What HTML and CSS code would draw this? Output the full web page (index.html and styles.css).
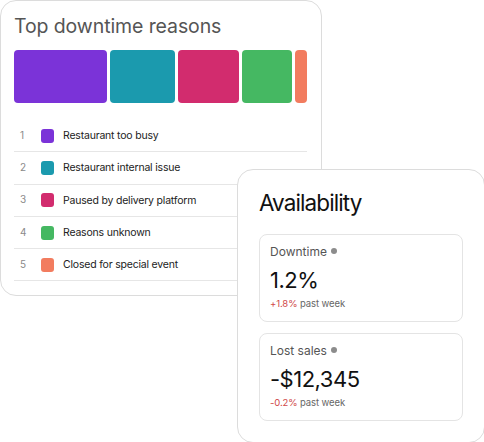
FILE: index.html
```html
<!DOCTYPE html>
<html>
<head>
<meta charset="utf-8">
<link rel="stylesheet" href="styles.css">
</head>
<body>
<div class="canvas">
  <section class="card reasons">
    <h2 class="reasons-title">Top downtime reasons</h2>
    <div class="bars">
      <div class="bar c1" style="width:93px"></div>
      <div class="bar c2" style="width:65px"></div>
      <div class="bar c3" style="width:61px"></div>
      <div class="bar c4" style="width:50px"></div>
      <div class="bar c5" style="width:12px"></div>
    </div>
    <ul class="list">
      <li class="row"><span class="num">1</span><span class="sw c1"></span><span class="label">Restaurant too busy</span></li>
      <li class="row"><span class="num">2</span><span class="sw c2"></span><span class="label">Restaurant internal issue</span></li>
      <li class="row"><span class="num">3</span><span class="sw c3"></span><span class="label">Paused by delivery platform</span></li>
      <li class="row"><span class="num">4</span><span class="sw c4"></span><span class="label">Reasons unknown</span></li>
      <li class="row"><span class="num">5</span><span class="sw c5"></span><span class="label">Closed for special event</span></li>
    </ul>
  </section>

  <section class="card avail">
    <h2 class="avail-title">Availability</h2>
    <div class="metric">
      <div class="m-label">Downtime <span class="dot"></span></div>
      <div class="m-value">1.2%</div>
      <div class="m-sub"><span class="neg">+1.8%</span> past week</div>
    </div>
    <div class="metric">
      <div class="m-label">Lost sales <span class="dot"></span></div>
      <div class="m-value">-$12,345</div>
      <div class="m-sub"><span class="neg">-0.2%</span> past week</div>
    </div>
  </section>
</div>
</body>
</html>
```

FILE: styles.css
```css
* { box-sizing: border-box; }
html, body { margin: 0; padding: 0; background: #fff; }
body { font-family: Inter, "Noto Sans", sans-serif; color: #111; }

.canvas {
  position: relative;
  width: 484px;
  height: 442px;
  overflow: hidden;
}

.card {
  background: #fff;
  border: 1px solid #dcdcdc;
  border-radius: 16px;
}

.reasons {
  width: 322px;
  height: 296px;
  padding: 13px 14px 0 13px;
}

.reasons-title {
  margin: 0;
  font-size: 19.5px;
  line-height: 24px;
  font-weight: 400;
  color: #555;
  letter-spacing: -0.1px;
}

.bars {
  display: flex;
  gap: 3px;
  margin-top: 12px;
  height: 53px;
}
.bar { height: 53px; border-radius: 4px; flex: none; }

.c1 { background: #7b33d8; }
.c2 { background: #1b9aae; }
.c3 { background: #d22c6e; }
.c4 { background: #45b862; }
.c5 { background: #f27c5f; }

.list {
  list-style: none;
  margin: 17px 0 0 0;
  padding: 0;
  width: 293px;
}
.row {
  display: flex;
  align-items: center;
  height: 32.3px;
  border-bottom: 1px solid #e6e6e6;
}
.num {
  width: 27px;
  padding-left: 6px;
  font-size: 10px;
  color: #8a8a8a;
  margin-top: -2px;
}
.sw {
  width: 13px;
  height: 14px;
  border-radius: 3px;
  margin-right: 9px;
  flex: none;
}
.label {
  font-size: 10.5px;
  letter-spacing: -0.2px;
  color: #222;
}

.avail {
  position: absolute;
  left: 237px;
  top: 169px;
  width: 248px;
  height: 274px;
  padding: 19px 21px 0 21px;
}

.avail-title {
  margin: 0 0 17px 0;
  font-size: 22.5px;
  line-height: 28px;
  font-weight: 400;
  color: #111;
  letter-spacing: -0.9px;
}

.metric {
  width: 204px;
  height: 88px;
  border: 1px solid #e4e4e4;
  border-radius: 8px;
  padding: 9px 10px 0 10px;
  margin-bottom: 11px;
}
.m-label {
  display: flex;
  align-items: center;
  font-size: 12px;
  line-height: 16px;
  color: #555;
}
.dot {
  width: 6px;
  height: 6px;
  border-radius: 50%;
  background: #8c8c8c;
  margin-left: 4px;
  margin-top: -2px;
}
.m-value {
  margin-top: 6px;
  font-size: 22px;
  line-height: 28px;
  color: #111;
  letter-spacing: -0.5px;
}
.m-sub {
  margin-top: 3px;
  font-size: 9.5px;
  line-height: 14px;
  letter-spacing: -0.1px;
  color: #666;
}
.neg { color: #d04848; }
```
